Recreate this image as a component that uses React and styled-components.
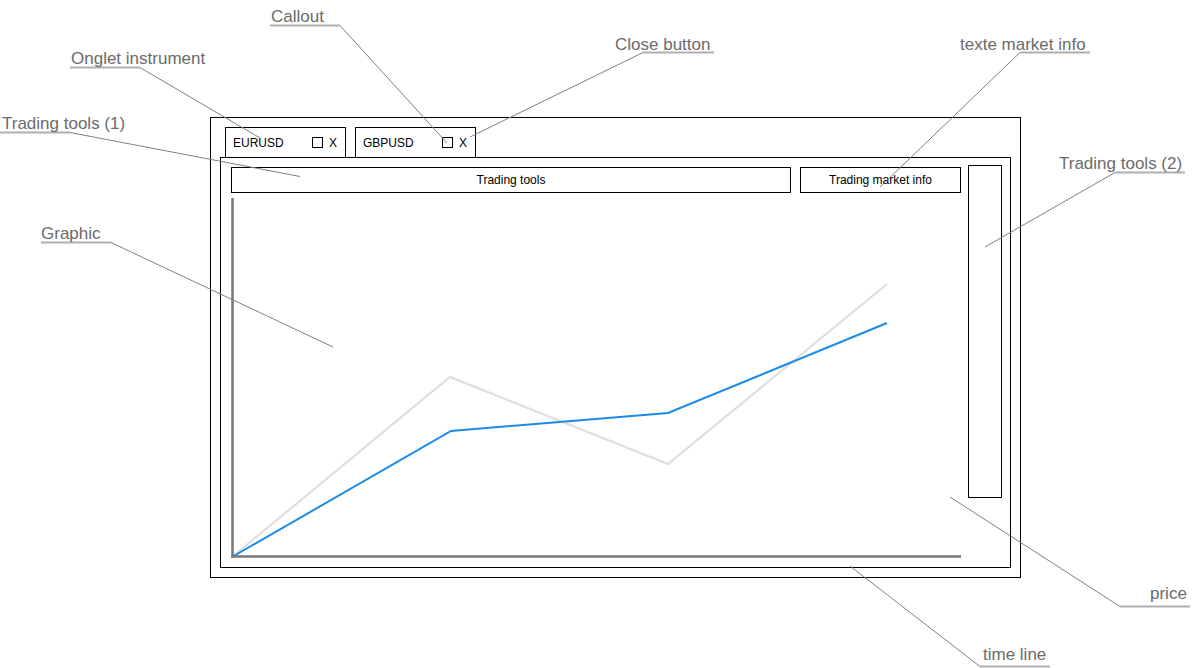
import React from "react";
import styled, { createGlobalStyle } from "styled-components";

const GlobalStyle = createGlobalStyle`
  body {
    margin: 0;
    background: #ffffff;
    font-family: "Liberation Sans", Arial, sans-serif;
  }
`;

// annotation labels: text position, underline and leader target
const callouts = [
  { text: "Callout", left: 271, top: 8, u: [270, 340, 25.5], to: [447, 143] },
  { text: "Onglet instrument", left: 71, top: 50, u: [70, 140, 67.5], to: [260, 138] },
  { text: "Trading tools (1)", left: 2, top: 115, u: [0, 70, 132.5], to: [300, 176.5] },
  { text: "Close button", left: 615, top: 36, u: [643, 714, 52.5], to: [470, 137], from: "start" },
  { text: "texte market info", left: 960, top: 36, u: [1020, 1090, 52.5], to: [880, 187], from: "start" },
  { text: "Trading tools (2)", left: 1059, top: 155, u: [1115, 1185, 172.5], to: [985, 247], from: "start" },
  { text: "Graphic", left: 41, top: 225, u: [41, 111, 242.5], to: [333, 347] },
  { text: "price", left: 1150, top: 585, u: [1120, 1190, 606.5], to: [950, 497], from: "start" },
  { text: "time line", left: 983, top: 646, u: [980, 1050, 666.5], to: [850, 566], from: "start" },
];

const tabs = ["EURUSD", "GBPUSD"];

const bluePoints = "1,361 220,235 437,217 656,127";
const grayPoints = "1,361 219,181 437,268 656,88";

export default function App() {
  return (
    <>
      <GlobalStyle />
      <Stage>
        <Window>
          <TabRow>
            {tabs.map((t) => (
              <Tab key={t}>
                <TabLabel>{t}</TabLabel>
                <CheckBox />
                <CloseX>X</CloseX>
              </Tab>
            ))}
          </TabRow>
          <Panel>
            <MainColumn>
              <ToolRow>
                <ToolBox>Trading tools</ToolBox>
                <InfoBox>Trading market info</InfoBox>
              </ToolRow>
              <Chart width="730" height="364" viewBox="0 0 730 364">
                <polyline points={grayPoints} fill="none" stroke="#dddddd" strokeWidth="2" />
                <polyline points={bluePoints} fill="none" stroke="#1a8be8" strokeWidth="2" />
                <line x1="1.5" y1="2" x2="1.5" y2="361" stroke="#777777" strokeWidth="2.5" />
                <line x1="0" y1="360.5" x2="730" y2="360.5" stroke="#777777" strokeWidth="2.5" />
              </Chart>
            </MainColumn>
            <SidePanel />
          </Panel>
        </Window>

        <Overlay width="1192" height="668" viewBox="0 0 1192 668">
          {callouts.map((c) => {
            const [x1, x2, y] = c.u;
            const sx = c.from === "start" ? x1 : x2;
            return (
              <g key={c.text}>
                <line x1={x1} y1={y} x2={x2} y2={y} stroke="#b0b0b0" strokeWidth="2" />
                <line x1={sx} y1={y} x2={c.to[0]} y2={c.to[1]} stroke="#808080" strokeWidth="1" />
              </g>
            );
          })}
        </Overlay>

        {callouts.map((c) => (
          <Label key={c.text} $left={c.left} $top={c.top}>
            {c.text}
          </Label>
        ))}
      </Stage>
    </>
  );
}

const Stage = styled.div`
  position: relative;
  width: 1192px;
  height: 668px;
  box-sizing: border-box;
  padding: 117px 0 0 210px;
  overflow: hidden;
`;

const Window = styled.div`
  width: 811px;
  height: 461px;
  box-sizing: border-box;
  border: 1px solid #000;
  padding: 9px;
  display: flex;
  flex-direction: column;
`;

const TabRow = styled.div`
  display: flex;
  gap: 9px;
  padding-left: 5px;
  height: 30px;
`;

const Tab = styled.div`
  width: 121px;
  height: 30px;
  box-sizing: border-box;
  border: 1px solid #000;
  border-bottom: none;
  display: flex;
  align-items: center;
  padding: 0 8px 0 7px;
  font-size: 12px;
  color: #000;
`;

const TabLabel = styled.span`
  flex: 1;
  padding-top: 1px;
`;

const CheckBox = styled.span`
  width: 11px;
  height: 11px;
  box-sizing: border-box;
  border: 1px solid #000;
  margin-right: 6px;
`;

const CloseX = styled.span`
  padding-top: 1px;
`;

const Panel = styled.div`
  height: 411px;
  box-sizing: border-box;
  border: 1px solid #000;
  padding: 7px 8px 0 10px;
  display: flex;
  gap: 7px;
`;

const MainColumn = styled.div`
  width: 730px;
  padding-top: 2px;
  display: flex;
  flex-direction: column;
`;

const ToolRow = styled.div`
  display: flex;
  gap: 9px;
  height: 26px;
`;

const Box = styled.div`
  height: 26px;
  box-sizing: border-box;
  border: 1px solid #000;
  display: flex;
  align-items: center;
  justify-content: center;
  font-size: 12px;
  color: #000;
`;

const ToolBox = styled(Box)`
  flex: 1;
`;

const InfoBox = styled(Box)`
  width: 161px;
`;

const Chart = styled.svg`
  display: block;
  margin-top: 3px;
`;

const SidePanel = styled.div`
  width: 34px;
  height: 333px;
  box-sizing: border-box;
  border: 1px solid #000;
`;

const Overlay = styled.svg`
  position: absolute;
  left: 0;
  top: 0;
  pointer-events: none;
`;

const Label = styled.span`
  position: absolute;
  left: ${(p) => p.$left}px;
  top: ${(p) => p.$top}px;
  font-size: 17px;
  line-height: 18px;
  color: #6b6b6b;
  white-space: nowrap;
`;
